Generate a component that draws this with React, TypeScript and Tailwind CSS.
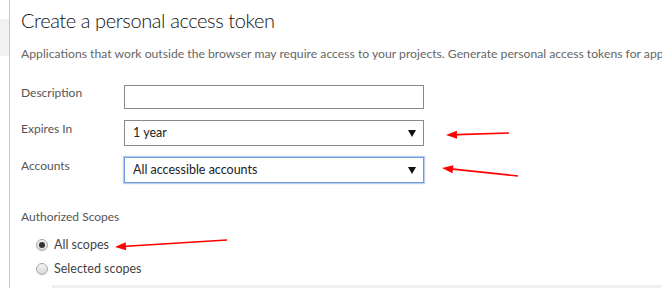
const font = { fontFamily: 'Lato, "Open Sans", sans-serif' };

function Arrow({ x1, y1, x2, y2 }: { x1: number; y1: number; x2: number; y2: number }) {
  // tip at (x1, y1), tail at (x2, y2)
  const a = Math.atan2(y2 - y1, x2 - x1);
  const len = 11;
  const w = 4;
  const bx = x1 + Math.cos(a) * len;
  const by = y1 + Math.sin(a) * len;
  const px = -Math.sin(a) * w;
  const py = Math.cos(a) * w;
  return (
    <g>
      <line x1={bx} y1={by} x2={x2} y2={y2} stroke="#ff0000" strokeWidth={1.6} />
      <polygon points={`${x1},${y1} ${bx + px},${by + py} ${bx - px},${by - py}`} fill="#ff0000" />
    </g>
  );
}

function Caret() {
  return (
    <svg width="8" height="7" viewBox="0 0 8 7" className="shrink-0">
      <path d="M0 0 H8 L4 7 Z" fill="#111" />
    </svg>
  );
}

function Radio({ checked, label }: { checked?: boolean; label: string }) {
  return (
    <label className="flex items-center gap-[6px] h-[24px] text-[12.5px] text-[#444]">
      <span className="w-[12px] h-[12px] rounded-full border border-[#a8a8a8] bg-gradient-to-b from-[#f4f4f4] to-[#d8d8d8] flex items-center justify-center">
        {checked && <span className="w-[6px] h-[6px] rounded-full bg-[#333]" />}
      </span>
      {label}
    </label>
  );
}

export default function App() {
  return (
    <div className="relative w-[662px] h-[288px] overflow-hidden bg-white flex" style={font}>
      {/* left collapsed panel */}
      <div className="w-[10px] shrink-0 border-r border-[#c8c8c8] flex flex-col">
        <span className="text-[11px] leading-[10px] text-[#777] -ml-[3px] -mt-[1px]">&lsaquo;</span>
        <div className="mt-[10px] h-[37px] bg-[#f1f1f1]" />
      </div>

      <div className="flex-1 min-w-0 pl-[11px] flex flex-col">
        <h1 className="mt-[6px] text-[20px] font-light leading-[28px] tracking-[-0.4px] text-[#111] whitespace-nowrap">
          Create a personal access token
        </h1>
        <p className="mt-[11px] text-[12.2px] leading-[18px] text-[#666] whitespace-nowrap">
          Applications that work outside the browser may require access to your projects. Generate personal access tokens for applications
        </p>

        <div className="mt-[22px] grid grid-cols-[103px_300px] gap-y-[11px] text-[12px] text-[#555]">
          <span className="leading-[16px]">Description</span>
          <div className="h-[24px] border border-[#8a8a8a]" />

          <span className="leading-[16px] pt-[1px]">Expires In</span>
          <div className="h-[26px] border border-[#8a8a8a] flex items-center justify-between pl-[8px] pr-[7px] text-[#222] text-[12.5px]">
            <span>1 year</span>
            <Caret />
          </div>

          <span className="leading-[16px] pt-[1px]">Accounts</span>
          <div className="h-[26px] border border-[#6f9ad8] shadow-[0_0_1px_1px_#b8cff0] flex items-center justify-between pl-[8px] pr-[7px] text-[#222] text-[12.5px]">
            <span>All accessible accounts</span>
            <Caret />
          </div>
        </div>

        <p className="mt-[26px] text-[12px] leading-[16px] text-[#555]">Authorized Scopes</p>
        <div className="mt-[8px] pl-[15px] flex flex-col">
          <Radio checked label="All scopes" />
          <Radio label="Selected scopes" />
        </div>
        <div className="mt-auto ml-[31px] h-[3px] bg-[#f0f0f0]" />
      </div>

      {/* red annotation arrows */}
      <svg className="absolute inset-0 pointer-events-none" width="662" height="288">
        <Arrow x1={446} y1={135} x2={509} y2={133} />
        <Arrow x1={442} y1={168} x2={518} y2={176} />
        <Arrow x1={115} y1={247} x2={227} y2={240} />
      </svg>
    </div>
  );
}
